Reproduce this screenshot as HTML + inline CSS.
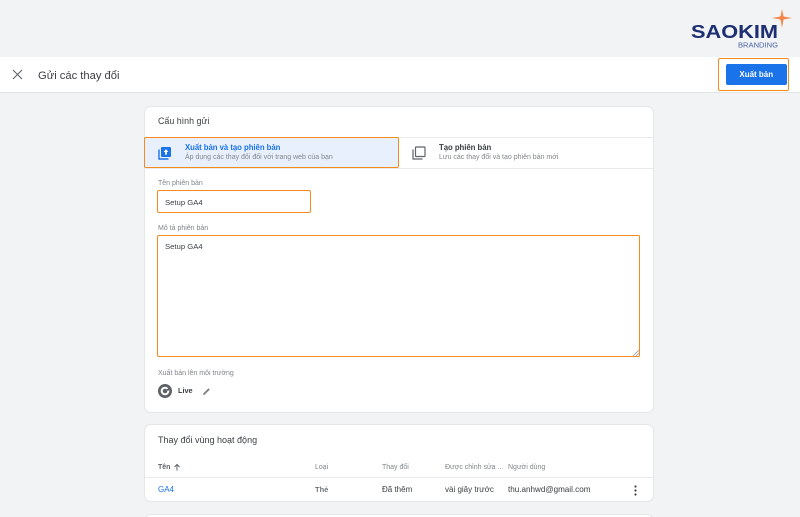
<!DOCTYPE html>
<html lang="vi"><head><meta charset="utf-8"><title>Gửi các thay đổi</title>
<style>
html,body{margin:0;padding:0}
body{width:800px;height:517px;overflow:hidden;background:#f1f3f4;position:relative;font-family:"Liberation Sans",Arial,sans-serif;color:#202124}
#w{position:absolute;left:0;top:0;width:800px;height:517px;overflow:hidden;filter:blur(.25px)}
.a{position:absolute;white-space:nowrap}
.card{position:absolute;background:#fff;border:1px solid #e4e6e8;border-radius:7px;box-sizing:border-box}
.o{position:absolute;border:1.5px solid #f58b1f;box-sizing:border-box;border-radius:2px}
.g{color:#80868b}
.t{font-size:8px;line-height:10px}
.s{font-size:7px;line-height:10px}
</style></head><body><div id="w">

<svg class="a" style="left:680px;top:0" width="120" height="56" viewBox="0 0 120 56">
<path d="M102 9 L103.500 16.500 L112 18 L103.500 19.500 L102 28 L100.500 19.500 L92 18 L100.500 16.500Z" fill="#f4874b"/>
<circle cx="102" cy="18" r="2.500" fill="#f4874b"/>
<text x="11" y="38" font-family="Liberation Sans" font-weight="700" font-size="18" fill="#1d2f72" textLength="87" lengthAdjust="spacingAndGlyphs">SAOKIM</text>
<text x="58" y="47.500" font-family="Liberation Sans" font-size="7.500" fill="#4a62a8" textLength="40" lengthAdjust="spacingAndGlyphs">BRANDING</text>
</svg>

<div class="a" style="left:0;top:57px;width:800px;height:36px;background:#fff;border-bottom:1px solid #e2e4e6;box-sizing:border-box"></div>
<svg class="a" style="left:12px;top:69px" width="11" height="11" viewBox="0 0 11 11"><path d="M1 1L10 10M10 1L1 10" stroke="#5f6368" stroke-width="1.100" fill="none"/></svg>
<div class="a" style="left:38px;top:69px;font-size:11.200px;line-height:14px;color:#3c4043">Gửi các thay đổi</div>
<div class="a" style="left:725.500px;top:64px;width:61.500px;height:21px;background:#1a73e8;border-radius:2px;color:#fff;font-size:8px;font-weight:700;line-height:21px;text-align:center">Xuất bản</div>
<div class="o" style="left:718px;top:58px;width:71px;height:33px"></div>

<div class="card" style="left:144px;top:106px;width:510px;height:307px"></div>
<div class="a" style="left:158px;top:115px;font-size:8.900px;line-height:12px;color:#3c4043">Cấu hình gửi</div>
<div class="a" style="left:145px;top:137px;width:508px;height:32px;border-top:1px solid #e8eaed;border-bottom:1px solid #e8eaed;box-sizing:border-box"></div>
<div class="a" style="left:145px;top:138px;width:253px;height:30px;background:#e8f0fe"></div>
<div class="o" style="left:144px;top:137px;width:255px;height:31px"></div>
<svg class="a" style="left:158px;top:146px" width="14" height="14" viewBox="0 0 14 14"><path d="M1 3.500V13H10.500" stroke="#1a73e8" stroke-width="1.400" fill="none"/><rect x="3" y="1" width="10" height="10" rx="1" fill="#1a73e8"/><path d="M8 3L10.400 6H8.900V8.600H7.100V6H5.600Z" fill="#fff"/></svg>
<div class="a" style="left:185px;top:142px;font-size:7.800px;line-height:11px;color:#1a73e8;font-weight:700;letter-spacing:-.05px">Xuất bản và tạo phiên bản</div>
<div class="a s g" style="left:185px;top:152.500px">Áp dụng các thay đổi đối với trang web của bạn</div>
<svg class="a" style="left:412px;top:146px" width="14" height="14" viewBox="0 0 14 14" fill="none" stroke="#5f6368" stroke-width="1.200"><rect x="3.500" y="1" width="9.500" height="9.500" rx=".6"/><path d="M1 3.500V13H10.500"/></svg>
<div class="a" style="left:439px;top:142px;font-size:7.800px;line-height:11px;color:#3c4043;font-weight:700;letter-spacing:-.05px">Tạo phiên bản</div>
<div class="a s g" style="left:439px;top:152.500px">Lưu các thay đổi và tạo phiên bản mới</div>

<div class="a s g" style="left:158px;top:179px">Tên phiên bản</div>
<div class="o" style="left:157px;top:190px;width:154px;height:23px;background:#fff"></div>
<div class="a" style="left:165px;top:196.500px;font-size:7.700px;line-height:11px;color:#3c4043">Setup GA4</div>

<div class="a s g" style="left:158px;top:224px">Mô tả phiên bản</div>
<div class="o" style="left:157px;top:235px;width:483px;height:122px;background:#fff"></div>
<div class="a" style="left:165px;top:240.500px;font-size:7.700px;line-height:11px;color:#3c4043">Setup GA4</div>
<svg class="a" style="left:633px;top:350px" width="6" height="6" viewBox="0 0 6 6"><path d="M0 6L6 0M3 6L6 3" stroke="#9aa0a6" stroke-width=".8"/></svg>

<div class="a s g" style="left:158px;top:368.500px">Xuất bản lên môi trường</div>
<svg class="a" style="left:158px;top:384px" width="14" height="14" viewBox="0 0 14 14"><circle cx="7" cy="7" r="7" fill="#5f6368"/><circle cx="7" cy="7" r="4.300" fill="#fff"/><circle cx="7" cy="7" r="2.300" fill="#5f6368"/><path d="M7 7L11 3.500V6.500Z" fill="#5f6368"/></svg>
<div class="a" style="left:178px;top:386px;font-size:7.300px;line-height:10px;font-weight:700;color:#3c4043">Live</div>
<svg class="a" style="left:202px;top:387px" width="9" height="9" viewBox="0 0 9 9"><path d="M1 8L1.400 6.200 6.400 1.200 7.800 2.600 2.800 7.600Z" fill="#80868b"/></svg>

<div class="card" style="left:144px;top:424px;width:510px;height:78px"></div>
<div class="a" style="left:158px;top:433.500px;font-size:9px;line-height:12px;color:#3c4043">Thay đổi vùng hoạt động</div>
<div class="a s" style="left:158px;top:462.500px;font-weight:700;color:#5f6368">Tên</div>
<svg class="a" style="left:172.500px;top:462.500px" width="8" height="8" viewBox="0 0 8 8"><path d="M4 7.500V1.500M1.500 4L4 1.500 6.500 4" stroke="#5f6368" stroke-width="1" fill="none"/></svg>
<div class="a s g" style="left:315px;top:462.500px">Loại</div>
<div class="a s g" style="left:382px;top:462.500px">Thay đổi</div>
<div class="a s g" style="left:445px;top:462.500px">Được chỉnh sửa ...</div>
<div class="a s g" style="left:508px;top:462.500px">Người dùng</div>
<div class="a" style="left:145px;top:477px;width:508px;height:1px;background:#e8eaed"></div>
<div class="a t" style="left:158px;top:484.500px;color:#1a73e8">GA4</div>
<div class="a t" style="left:315px;top:484.500px;color:#70757a;font-weight:700;font-size:7.500px">Thẻ</div>
<div class="a t" style="left:382px;top:484.500px;color:#3c4043">Đã thêm</div>
<div class="a t" style="left:445px;top:484.500px;color:#3c4043">vài giây trước</div>
<div class="a" style="left:508px;top:483.500px;font-size:8.100px;line-height:11px;color:#3c4043">thu.anhwd@gmail.com</div>
<svg class="a" style="left:634px;top:485px" width="3" height="11" viewBox="0 0 3 11"><circle cx="1.500" cy="1.500" r="1.100" fill="#3c4043"/><circle cx="1.500" cy="5.500" r="1.100" fill="#3c4043"/><circle cx="1.500" cy="9.500" r="1.100" fill="#3c4043"/></svg>

<div class="card" style="left:144px;top:514px;width:510px;height:20px"></div>
</div></body></html>
